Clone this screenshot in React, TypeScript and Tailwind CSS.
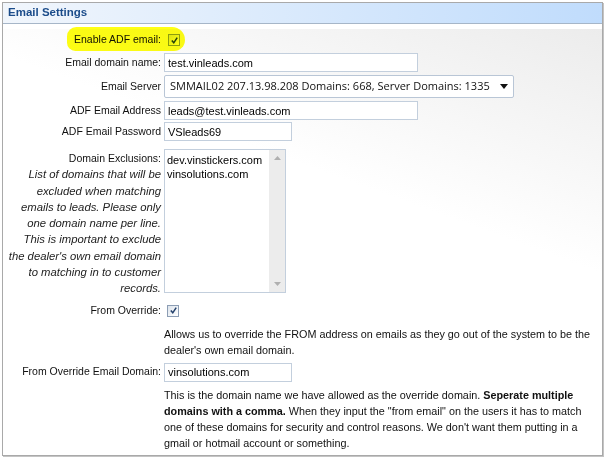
import React from 'react';

const font = { fontFamily: '"Liberation Sans", Arial, sans-serif' };

function Row({ label, children, className = '' }: { label?: React.ReactNode; children?: React.ReactNode; className?: string }) {
  return (
    <div className={`flex ${className}`}>
      <div className="w-[161px] shrink-0 pr-[3px] text-right">{label}</div>
      <div className="flex-1">{children}</div>
    </div>
  );
}

function Checkbox() {
  return (
    <span className="inline-flex h-[12px] w-[12px] items-center justify-center border border-[#8c9db4] bg-[linear-gradient(135deg,#dde4ec,#ffffff)]">
      <svg viewBox="0 0 10 10" className="h-[9px] w-[9px]">
        <path d="M2 5 L4.2 7.6 L8 1.8" fill="none" stroke="#23406b" strokeWidth="1.7" />
      </svg>
    </span>
  );
}

function TextBox({ value, width }: { value: string; width: string }) {
  return (
    <input
      readOnly
      value={value}
      className={`${width} h-[19px] border border-[#c3cfdd] bg-white px-[3px] text-[11px] text-black outline-none`}
      style={font}
    />
  );
}

export default function App() {
  return (
    <div className="h-[458px] w-[608px] bg-white pl-[2px] pt-[2px] text-[10.5px] text-[#111]" style={font}>
      <div className="w-[601px] border border-[#a9a9a9] shadow-[1px_1px_0_#c4c4c4]">
        {/* Header */}
        <div className="flex h-[21px] items-center border-b border-[#a6b6c8] bg-[linear-gradient(to_right,#f1f6fc,#c0dcfc)] pl-[5px]">
          <span className="text-[11.5px] font-bold text-[#1b4c8a]">Email Settings</span>
        </div>

        {/* Body */}
        <div className="bg-[linear-gradient(200deg,#ececec_0%,#ffffff_38%)] pb-[4px]">
          <Row className="relative mt-[5px] h-[22px] items-center" label="Enable ADF email:">
            <div className="flex items-center pl-[4px]">
              <Checkbox />
            </div>
            <span className="pointer-events-none absolute left-[64px] top-[-2px] h-[24px] w-[118px] rounded-[10px_14px_12px_9px] bg-[#ffff14] mix-blend-multiply" />
          </Row>

          <Row className="mt-[2px] h-[19px] items-center" label="Email domain name:">
            <TextBox value="test.vinleads.com" width="w-[254px]" />
          </Row>

          <Row className="mt-[3px] h-[23px] items-center" label="Email Server">
            <div className="flex h-[23px] w-[350px] items-center justify-between rounded-[2px] border border-[#b9c6d6] bg-white pl-[5px] pr-[5px]">
              <span className="whitespace-nowrap text-[11px] text-[#111]" style={{ fontFamily: '"Open Sans", "Noto Sans", sans-serif' }}>
                SMMAIL02 207.13.98.208 Domains: 668, Server Domains: 1335
              </span>
              <svg viewBox="0 0 8 5" className="h-[5px] w-[8px]">
                <path d="M0 0 H8 L4 5 Z" fill="#111" />
              </svg>
            </div>
          </Row>

          <Row className="mt-[3px] h-[19px] items-center" label="ADF Email Address">
            <TextBox value="leads@test.vinleads.com" width="w-[254px]" />
          </Row>

          <Row className="mt-[2px] h-[19px] items-center" label="ADF Email Password">
            <TextBox value="VSleads69" width="w-[128px]" />
          </Row>

          <Row
            className="mt-[8px]"
            label={
              <div className="pt-[1px] leading-[16.3px]">
                <div>Domain Exclusions:</div>
                <div className="text-[11.3px] italic text-[#222]">
                  List of domains that will be
                  <br />
                  excluded when matching
                  <br />
                  emails to leads. Please only
                  <br />
                  one domain name per line.
                  <br />
                  This is important to exclude
                  <br />
                  the dealer's own email domain
                  <br />
                  to matching in to customer
                  <br />
                  records.
                </div>
              </div>
            }
          >
            <div className="flex h-[144px] w-[122px] border border-[#c3cfdd] bg-white">
              <div className="flex-1 pl-[2px] pt-[3px] text-[11px] leading-[14px] text-black">
                dev.vinstickers.com
                <br />
                vinsolutions.com
              </div>
              <div className="flex w-[16px] flex-col items-center justify-between bg-[#ececec] py-[6px]">
                <svg viewBox="0 0 7 4" className="h-[4px] w-[7px]">
                  <path d="M0 4 L3.5 0 L7 4 Z" fill="#b0b0b0" />
                </svg>
                <svg viewBox="0 0 7 4" className="h-[4px] w-[7px]">
                  <path d="M0 0 L7 0 L3.5 4 Z" fill="#b0b0b0" />
                </svg>
              </div>
            </div>
          </Row>

          <Row className="mt-[4px] h-[20px] items-center" label="From Override:">
            <div className="flex items-center pl-[3px]">
              <Checkbox />
            </div>
          </Row>

          <Row className="mt-[5px]">
            <p className="text-[10.8px] leading-[16px]">
              Allows us to override the FROM address on emails as they go out of the system to be the dealer's own email domain.
            </p>
          </Row>

          <Row className="mt-[5px] h-[19px] items-center" label="From Override Email Domain:">
            <TextBox value="vinsolutions.com" width="w-[128px]" />
          </Row>

          <Row className="mt-[5px]">
            <p className="pr-[6px] text-[10.8px] leading-[16px]">
              This is the domain name we have allowed as the override domain.{' '}
              <b>Seperate multiple domains with a comma.</b> When they input the "from email" on the users it has to match one of these
              domains for security and control reasons. We don't want them putting in a gmail or hotmail account or something.
            </p>
          </Row>
        </div>
      </div>
    </div>
  );
}
